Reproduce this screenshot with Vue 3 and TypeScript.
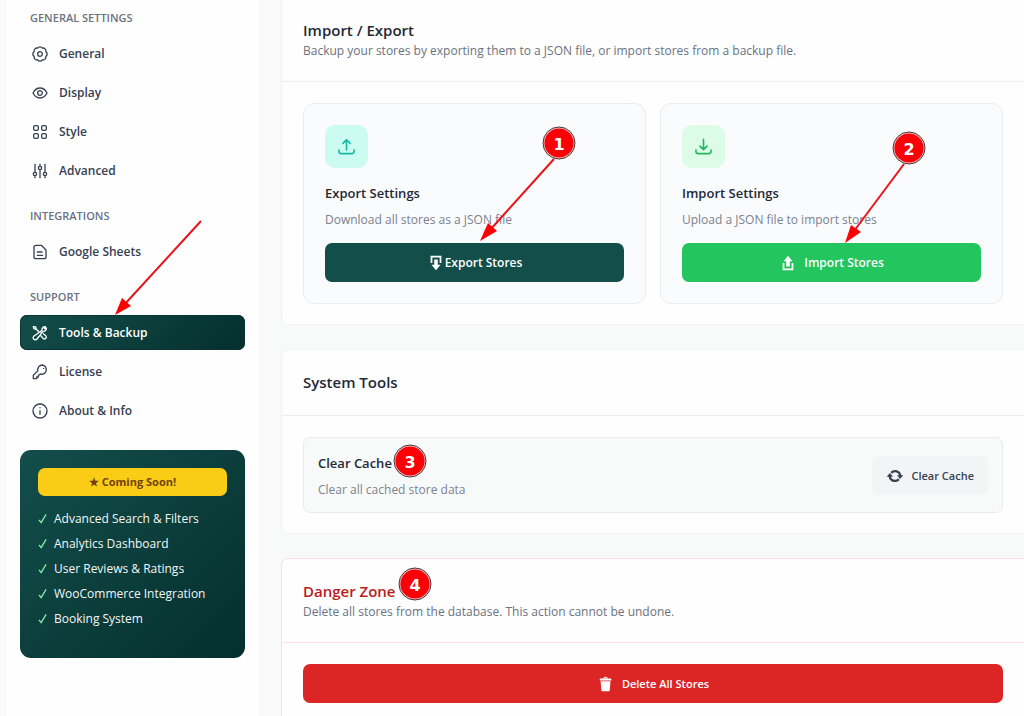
<script setup lang="ts">
import { ref } from 'vue'

interface NavItem {
  id: string
  label: string
  icon: string
}

interface NavGroup {
  title: string
  items: NavItem[]
}

const groups: NavGroup[] = [
  {
    title: 'General Settings',
    items: [
      { id: 'general', label: 'General', icon: 'M20.800 15.600A4.300 4.300 0 0 1 15.600 20.800 4.300 4.300 0 0 1 8.400 20.800 4.300 4.300 0 0 1 3.200 15.600 4.300 4.300 0 0 1 3.200 8.400 4.300 4.300 0 0 1 8.400 3.200 4.300 4.300 0 0 1 15.600 3.200 4.300 4.300 0 0 1 20.800 8.400 4.300 4.300 0 0 1 20.800 15.600zM15.500 12a3.500 3.500 0 1 1-7 0 3.500 3.500 0 0 1 7 0z' },
      { id: 'display', label: 'Display', icon: 'M1.500 12C4 7.200 8 4.500 12 4.500s8 2.700 10.500 7.500C20 16.800 16 19.500 12 19.500S4 16.800 1.500 12zM15.500 12a3.500 3.500 0 1 1-7 0 3.500 3.500 0 0 1 7 0z' },
      { id: 'style', label: 'Style', icon: 'M4.500 2.500h3a2 2 0 0 1 2 2v3a2 2 0 0 1-2 2h-3a2 2 0 0 1-2-2v-3a2 2 0 0 1 2-2zM16.500 2.500h3a2 2 0 0 1 2 2v3a2 2 0 0 1-2 2h-3a2 2 0 0 1-2-2v-3a2 2 0 0 1 2-2zM4.500 14.500h3a2 2 0 0 1 2 2v3a2 2 0 0 1-2 2h-3a2 2 0 0 1-2-2v-3a2 2 0 0 1 2-2zM16.500 14.500h3a2 2 0 0 1 2 2v3a2 2 0 0 1-2 2h-3a2 2 0 0 1-2-2v-3a2 2 0 0 1 2-2z' },
      { id: 'advanced', label: 'Advanced', icon: 'M4.500 2v12M4.500 19v3M12 2v3M12 10v12M19.500 2v12M19.500 19v3M7 16.500a2.500 2.500 0 1 1-5 0 2.500 2.500 0 0 1 5 0zM14.500 7.500a2.500 2.500 0 1 1-5 0 2.500 2.500 0 0 1 5 0zM22 16.500a2.500 2.500 0 1 1-5 0 2.500 2.500 0 0 1 5 0z' },
    ],
  },
  {
    title: 'Integrations',
    items: [
      { id: 'sheets', label: 'Google Sheets', icon: 'M14 2H6a3 3 0 0 0-3 3v14a3 3 0 0 0 3 3h12a3 3 0 0 0 3-3V9zM8 12h7M8 17h8' },
    ],
  },
  {
    title: 'Support',
    items: [
      { id: 'tools', label: 'Tools & Backup', icon: 'M11 11 6.500 6.500 3 5.500 2 2.500l3.500.3 1 3.700M12.500 10.500 15 7.500A4.500 4.500 0 0 1 20 2.500l-1.500 3 3-1A4.500 4.500 0 0 1 16.500 9.500L7.500 21a3.200 3.200 0 1 1-4.500-4.500l6.500-4.500M13.500 16.500l3.500 4a2.900 2.900 0 0 0 4-4L17 13' },
      { id: 'license', label: 'License', icon: 'M15.500 1.500a7 7 0 0 0-6.800 8.800L2 17v5h5v-2.500h2.500V17l3.200-1.800A7 7 0 1 0 15.500 1.500zM17.500 6.500v.1' },
      { id: 'about', label: 'About & Info', icon: 'M22.500 12a10.500 10.500 0 1 1-21 0 10.500 10.500 0 0 1 21 0zM12 11.500v5.500M12 7v.3' },
    ],
  },
]

const active = ref('tools')

const upcoming: string[] = [
  'Advanced Search & Filters',
  'Analytics Dashboard',
  'User Reviews & Ratings',
  'WooCommerce Integration',
  'Booking System',
]

const dash = {
  download: 'M14 4v6h2V2H4v8h2V4h8zm-2 2v6h3l-5 6-5-6h3V6h4z',
  upload: 'M8 14V8H5l5-6 5 6h-3v6H8zm-2 2v-6H4v8h12v-8h-2v6H6z',
  update: 'M10.200 3.280c3.530 0 6.430 2.610 6.920 6h2.080l-3.500 4-3.500-4h2.320c-.45-1.970-2.210-3.450-4.320-3.450-1.450 0-2.730.71-3.540 1.780L4.950 5.660C6.230 4.200 8.110 3.280 10.200 3.280zm-.4 13.440c-3.520 0-6.430-2.610-6.920-6H.8l3.500-4c1.170 1.330 2.330 2.670 3.500 4H5.480c.45 1.970 2.210 3.450 4.320 3.450 1.450 0 2.730-.71 3.540-1.780l1.710 1.950c-1.280 1.460-3.150 2.380-5.250 2.380z',
  trash: 'M12 4h3c.6 0 1 .4 1 1v1H3V5c0-.6.5-1 1-1h3c.2-1.100 1.300-2 2.500-2s2.300.9 2.500 2zM8 4h3c-.2-.6-.9-1-1.500-1S8.200 3.400 8 4zM4 7h11l-.9 10.100c0 .5-.5.9-1 .9H5.900c-.5 0-.9-.4-1-.9L4 7z',
}

const arrows = [
  { line: 'M201 221 124 305', head: '115,315 122,298 131,306' },
  { line: 'M554 159 490 230', head: '480,241 488,223 497,231' },
  { line: 'M904 164 854 231', head: '845,243 851,225 861,232' },
]

const pins = [
  { n: 1, x: 559, y: 143 },
  { n: 2, x: 909, y: 148 },
  { n: 3, x: 410, y: 461 },
  { n: 4, x: 415, y: 584 },
]
</script>

<template>
  <div class="shell">
    <aside class="sidebar">
      <nav>
        <section v-for="group in groups" :key="group.title" class="group">
          <h3 class="group-title">{{ group.title }}</h3>
          <ul class="nav-list">
            <li v-for="item in group.items" :key="item.id">
              <a
                href="#"
                class="nav-link"
                :class="{ active: active === item.id }"
                @click.prevent="active = item.id"
              >
                <svg class="nav-icon" viewBox="0 0 24 24" aria-hidden="true"><path :d="item.icon" /></svg>
                <span>{{ item.label }}</span>
              </a>
            </li>
          </ul>
        </section>
      </nav>
      <div class="promo">
        <div class="promo-badge">★ Coming Soon!</div>
        <ul class="promo-list">
          <li v-for="feature in upcoming" :key="feature">
            <svg class="check" viewBox="0 0 10 12" aria-hidden="true"><path d="M1 7.500 3.500 10.500 9 1.500" /></svg>
            <span>{{ feature }}</span>
          </li>
        </ul>
      </div>
    </aside>

    <main class="content">
      <section class="panel first">
        <header class="panel-head">
          <h2>Import / Export</h2>
          <p>Backup your stores by exporting them to a JSON file, or import stores from a backup file.</p>
        </header>
        <div class="panel-body cards">
          <article class="card">
            <div class="tile teal">
              <svg viewBox="0 0 24 24" aria-hidden="true"><path d="M12 16.500V4M7.500 8 12 3.500 16.500 8M2.500 16.500V18a3 3 0 0 0 3 3h13a3 3 0 0 0 3-3v-1.500" /></svg>
            </div>
            <h4>Export Settings</h4>
            <p>Download all stores as a JSON file</p>
            <button type="button" class="btn dark">
              <svg class="dash" viewBox="0 0 20 20" aria-hidden="true"><path :d="dash.download" /></svg>
              <span>Export Stores</span>
            </button>
          </article>
          <article class="card">
            <div class="tile green">
              <svg viewBox="0 0 24 24" aria-hidden="true"><path d="M12 3v12.500M7.500 11.500 12 16l4.500-4.500M2.500 16.500V18a3 3 0 0 0 3 3h13a3 3 0 0 0 3-3v-1.500" /></svg>
            </div>
            <h4>Import Settings</h4>
            <p>Upload a JSON file to import stores</p>
            <button type="button" class="btn success spaced">
              <svg class="dash" viewBox="0 0 20 20" aria-hidden="true"><path :d="dash.upload" /></svg>
              <span>Import Stores</span>
            </button>
          </article>
        </div>
      </section>

      <section class="panel">
        <header class="panel-head">
          <h2>System Tools</h2>
        </header>
        <div class="panel-body">
          <div class="tool-row">
            <div>
              <h4>Clear Cache</h4>
              <p>Clear all cached store data</p>
            </div>
            <button type="button" class="btn soft spaced small">
              <svg class="dash" viewBox="0 0 20 20" aria-hidden="true"><path :d="dash.update" /></svg>
              <span>Clear Cache</span>
            </button>
          </div>
        </div>
      </section>

      <section class="panel danger">
        <header class="panel-head">
          <h2>Danger Zone</h2>
          <p>Delete all stores from the database. This action cannot be undone.</p>
        </header>
        <div class="panel-body">
          <button type="button" class="btn red spaced small">
            <svg class="dash" viewBox="0 0 20 20" aria-hidden="true"><path :d="dash.trash" /></svg>
            <span>Delete All Stores</span>
          </button>
        </div>
      </section>
    </main>

    <svg class="notes" width="1024" height="716" viewBox="0 0 1024 716">
      <g v-for="arrow in arrows" :key="arrow.line">
        <path class="note-line" :d="arrow.line" />
        <polygon class="note-head" :points="arrow.head" />
      </g>
      <g v-for="pin in pins" :key="pin.n">
        <circle class="pin-rim" :cx="pin.x" :cy="pin.y" r="16" />
        <circle class="pin-fill" :cx="pin.x" :cy="pin.y" r="14.600" />
        <text class="pin-text" :x="pin.x" :y="pin.y + 7">{{ pin.n }}</text>
      </g>
    </svg>
  </div>
</template>

<style>
body {
  margin: 0;
}
</style>

<style scoped>
.shell {
  position: relative;
  display: flex;
  height: 100vh;
  overflow: hidden;
  box-sizing: border-box;
  padding-left: 6px;
  gap: 22px;
  background: #f8faf9;
  color: #1f2937;
  font-family: "Open Sans", "Noto Sans", sans-serif;
  font-size: 12px;
  line-height: 18px;
}

h2, h3, h4, p, ul {
  margin: 0;
  padding: 0;
}

ul {
  list-style: none;
}

.sidebar {
  flex: 0 0 253px;
  box-sizing: border-box;
  padding: 10px 14px;
  background: #fefefe;
}

.group + .group {
  margin-top: 20px;
}

.group-title {
  margin: 0 0 10px 10px;
  color: #6b7280;
  font-size: 11px;
  font-weight: 600;
  line-height: 16px;
  text-transform: uppercase;
}

.nav-list {
  display: flex;
  flex-direction: column;
  gap: 4px;
}

.nav-link {
  display: flex;
  align-items: center;
  gap: 11px;
  height: 35px;
  padding: 0 12px;
  border-radius: 7px;
  color: #374151;
  font-weight: 600;
  text-decoration: none;
}

.nav-link.active {
  background: linear-gradient(135deg, #134e4a, #042f2e);
  box-shadow: inset 0 0 0 1px #0a3532;
  color: #fff;
}

.nav-icon {
  width: 16px;
  height: 16px;
  fill: none;
  stroke: currentColor;
  stroke-width: 2;
  stroke-linecap: round;
  stroke-linejoin: round;
}

.promo {
  height: 208px;
  box-sizing: border-box;
  margin-top: 22px;
  padding: 18px;
  border-radius: 11px;
  background: linear-gradient(135deg, #134e4a, #042f2e);
  color: #f3f7f6;
}

.promo-badge {
  margin-bottom: 10px;
  border-radius: 7px;
  background: #facc15;
  color: #713f12;
  font-size: 11px;
  font-weight: 700;
  line-height: 28px;
  text-align: center;
}

.promo-list li {
  display: flex;
  align-items: center;
  gap: 7px;
  height: 25px;
}

.check {
  width: 9px;
  height: 11px;
  fill: none;
  stroke: #86efac;
  stroke-width: 1.4;
}

.content {
  flex: 1;
  min-width: 0;
  display: flex;
  flex-direction: column;
  gap: 24px;
}

.panel {
  flex: none;
  border: 1px solid #f1f4f5;
  border-right: 0;
  border-radius: 7px 0 0 7px;
  background: #fefefe;
}

.panel.first {
  border-top: 0;
  border-top-left-radius: 0;
}

.panel-head {
  padding: 20px 21px 21px;
  border-bottom: 1px solid #eceef0;
}

.first .panel-head {
  padding-top: 18px;
}

.panel-head h2 {
  color: #1f2937;
  font-size: 15px;
  font-weight: 600;
  line-height: 24px;
}

.panel-head p {
  color: #6b7280;
}

.panel-body {
  padding: 21px 21px 20px;
}

.cards {
  display: grid;
  grid-template-columns: 1fr 1fr;
  gap: 14px;
}

.card {
  padding: 21px;
  border: 1px solid #e9ecf0;
  border-radius: 11px;
  background: #fafbfc;
}

.tile {
  display: flex;
  align-items: center;
  justify-content: center;
  width: 43px;
  height: 43px;
  margin-bottom: 14px;
  border-radius: 10px;
}

.tile svg {
  width: 19px;
  height: 19px;
  fill: none;
  stroke: currentColor;
  stroke-width: 2;
  stroke-linecap: round;
  stroke-linejoin: round;
}

.teal {
  background: #ccfbf1;
  color: #14b8a6;
}

.green {
  background: #dcfce7;
  color: #22b463;
}

h4 {
  font-size: 13px;
  font-weight: 600;
  line-height: 22px;
}

.card p,
.tool-row p {
  margin-top: 7px;
  color: #7b828e;
}

.btn {
  display: flex;
  align-items: center;
  justify-content: center;
  width: 100%;
  height: 39px;
  padding: 0 14px;
  border: 0;
  border-radius: 7px;
  color: #fff;
  font-family: inherit;
  font-size: 12px;
  font-weight: 600;
  line-height: 18px;
}

.card .btn {
  margin-top: 14px;
}

.btn.small {
  font-size: 11px;
}

.spaced {
  gap: 7px;
}

.dark {
  background: #134e4a;
}

.success {
  background: #22c55e;
}

.red {
  background: #dc2626;
}

.soft {
  width: auto;
  background: #f3f4f6;
  color: #374151;
}

.dash {
  flex: none;
  width: 18px;
  height: 18px;
  fill: currentColor;
}

.tool-row {
  display: flex;
  align-items: center;
  justify-content: space-between;
  padding: 14px 14px 13px;
  border: 1px solid #e9eced;
  border-radius: 7px;
  background: #f8faf9;
}

.panel.danger {
  border-color: #fbdfe2;
}

.danger .panel-head {
  border-color: #fbdfe2;
}

.danger h2 {
  color: #b91c1c;
}

.notes {
  position: absolute;
  top: 0;
  left: 0;
  pointer-events: none;
}

.note-line {
  stroke: #e8141c;
  stroke-width: 2;
}

.note-head {
  fill: #ff0000;
}

.pin-rim {
  fill: #f4c8c8;
  stroke: #4a3030;
  stroke-width: 1;
}

.pin-fill {
  fill: #fb0007;
}

.pin-text {
  fill: #fff;
  font-family: "DejaVu Sans", sans-serif;
  font-size: 16px;
  font-weight: 700;
  text-anchor: middle;
}
</style>
